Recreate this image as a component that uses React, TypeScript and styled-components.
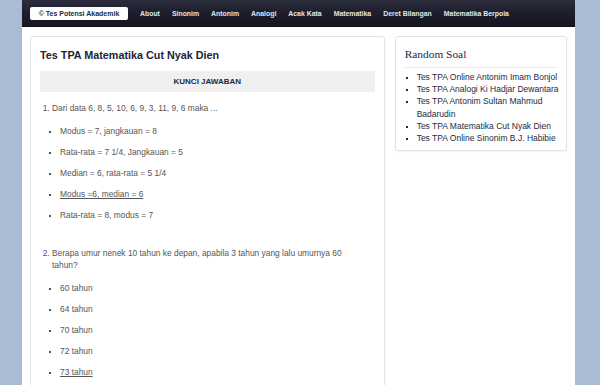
import React from "react";
import styled, { createGlobalStyle } from "styled-components";

const GlobalStyle = createGlobalStyle`
  html, body {
    margin: 0;
    padding: 0;
    background: #aabcd3;
    font-family: "Liberation Sans", Arial, sans-serif;
  }
`;

const Wrapper = styled.div`
  width: 553px;
  margin-left: 22px;
  background: #fff;
  min-height: 385px;
`;

const Navbar = styled.div`
  height: 27px;
  display: flex;
  align-items: center;
  padding-left: 8px;
  background: linear-gradient(to bottom, #2b2c3c 0%, #1c1d2a 55%, #151620 100%);
  border-bottom: 1px solid #0e0f16;
  box-sizing: border-box;
`;

const Brand = styled.a`
  background: #fff;
  color: #1c2a44;
  font-size: 7px;
  font-weight: bold;
  width: 98px;
  height: 13px;
  line-height: 13px;
  text-align: center;
  border-radius: 2px;
  margin-right: 12px;
`;

const NavLinks = styled.div`
  display: flex;
  gap: 12px;
`;

const NavLink = styled.a`
  color: #e4e5ea;
  font-size: 6.9px;
  font-weight: bold;
`;

const Content = styled.div`
  display: flex;
  align-items: flex-start;
  gap: 10px;
  padding: 9px 8px 0 8px;
`;

const Card = styled.div<{ $width: number }>`
  width: ${(p) => p.$width}px;
  box-sizing: border-box;
  background: #fff;
  border: 1px solid #e2e2e2;
  border-radius: 3px;
  box-shadow: 0 1px 2px rgba(0, 0, 0, 0.06);
`;

const MainCard = styled(Card)`
  padding: 10px 9px 20px 9px;
`;

const SideCard = styled(Card)`
  padding: 9px 5px 6px 9px;
`;

const Title = styled.h1`
  margin: 0 0 8px 0;
  font-size: 10.8px;
  font-weight: bold;
  color: #1b2536;
  line-height: 16px;
`;

const AnswerBar = styled.div`
  background: #f0f0f0;
  color: #1b2a44;
  font-size: 8px;
  font-weight: bold;
  text-align: center;
  height: 21px;
  line-height: 21px;
`;

const Questions = styled.ol`
  margin: 10px 0 0 0;
  padding: 0 22px 0 12px;
  color: #555;
  font-size: 8.4px;
  line-height: 12px;
`;

const Question = styled.li<{ $gap?: number }>`
  margin-bottom: ${(p) => p.$gap ?? 0}px;
`;

const Options = styled.ul`
  list-style: square;
  margin: 11px 0 0 0;
  padding: 0 0 0 8px;
`;

const Option = styled.li<{ $correct?: boolean }>`
  margin-bottom: 9px;
  text-decoration: ${(p) => (p.$correct ? "underline" : "none")};
  &::marker {
    font-size: 7px;
  }
`;

const SideTitle = styled.h2`
  margin: 0 4px 0 0;
  padding-bottom: 5px;
  font-family: "Liberation Serif", "DejaVu Serif", serif;
  font-weight: normal;
  font-size: 11.4px;
  color: #1b2a44;
  border-bottom: 1px solid #e6e6e6;
  line-height: 16px;
`;

const SideList = styled.ul`
  list-style: square;
  margin: 3px 0 0 0;
  padding: 0 0 0 12px;
  font-size: 8.5px;
  line-height: 12.2px;
  color: #1c2a44;
`;

const SideItem = styled.li`
  &::marker {
    font-size: 7px;
  }
`;

const navItems = [
  "About",
  "Sinonim",
  "Antonim",
  "Analogi",
  "Acak Kata",
  "Matematika",
  "Deret Bilangan",
  "Matematika Berpola",
];

const questions = [
  {
    text: "Dari data 6, 8, 5, 10, 6, 9, 3, 11, 9, 6 maka ...",
    options: [
      "Modus = 7, jangkauan = 8",
      "Rata-rata = 7 1/4, Jangkauan = 5",
      "Median = 6, rata-rata = 5 1/4",
      "Modus =6, median = 6",
      "Rata-rata = 8, modus = 7",
    ],
    correct: 3,
  },
  {
    text: "Berapa umur nenek 10 tahun ke depan, apabila 3 tahun yang lalu umurnya 60 tahun?",
    options: ["60 tahun", "64 tahun", "70 tahun", "72 tahun", "73 tahun"],
    correct: 4,
  },
];

const randomSoal = [
  "Tes TPA Online Antonim Imam Bonjol",
  "Tes TPA Analogi Ki Hadjar Dewantara",
  "Tes TPA Antonim Sultan Mahmud Badarudin",
  "Tes TPA Matematika Cut Nyak Dien",
  "Tes TPA Online Sinonim B.J. Habibie",
];

const App: React.FC = () => {
  return (
    <>
      <GlobalStyle />
      <Wrapper>
        <Navbar>
          <Brand>© Tes Potensi Akademik</Brand>
          <NavLinks>
            {navItems.map((n) => (
              <NavLink key={n}>{n}</NavLink>
            ))}
          </NavLinks>
        </Navbar>
        <Content>
          <MainCard $width={356}>
            <Title>Tes TPA Matematika Cut Nyak Dien</Title>
            <AnswerBar>KUNCI JAWABAN</AnswerBar>
            <Questions>
              {questions.map((q, i) => (
                <Question key={i} $gap={i === 0 ? 26 : 0}>
                  {q.text}
                  <Options>
                    {q.options.map((o, j) => (
                      <Option key={j} $correct={j === q.correct}>
                        {o}
                      </Option>
                    ))}
                  </Options>
                </Question>
              ))}
            </Questions>
          </MainCard>
          <SideCard $width={173}>
            <SideTitle>Random Soal</SideTitle>
            <SideList>
              {randomSoal.map((s) => (
                <SideItem key={s}>{s}</SideItem>
              ))}
            </SideList>
          </SideCard>
        </Content>
      </Wrapper>
    </>
  );
};

export default App;
